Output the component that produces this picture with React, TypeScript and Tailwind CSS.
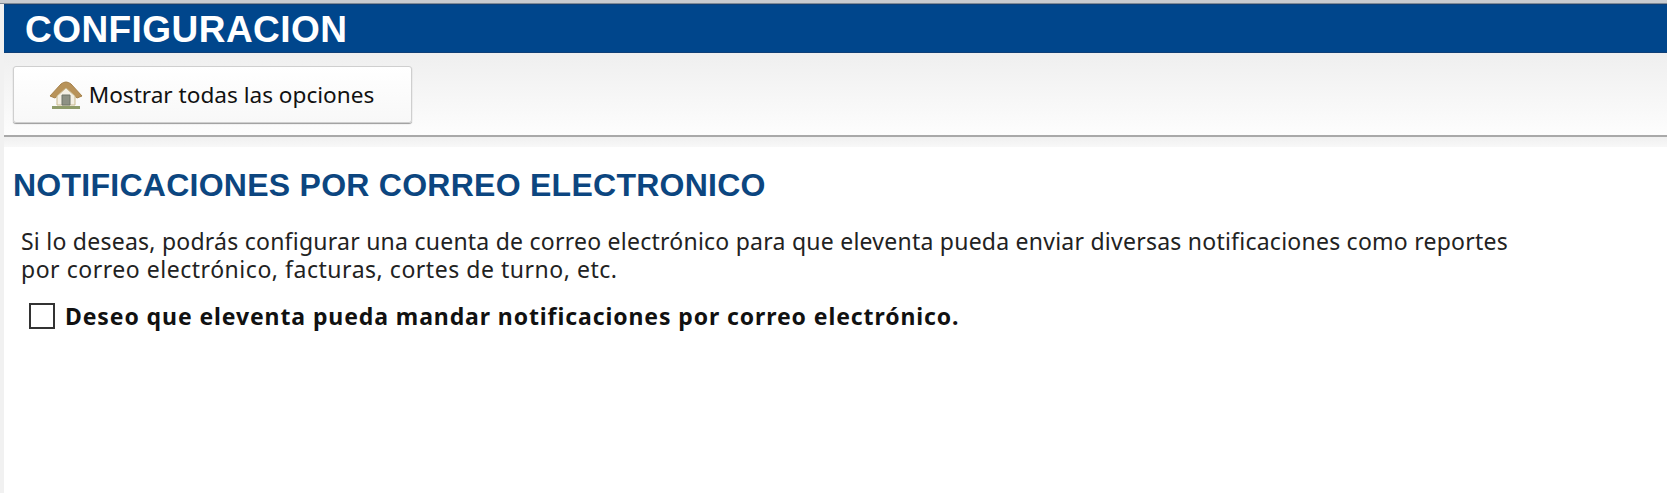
const HomeIcon = () => (
  <svg viewBox="0 0 34 30" className="h-[30px] w-[34px] shrink-0">
    <path d="M1 16 L12 4 Q17 0 22 4 L33 16 L28 18 L17 9 L6 18 Z" fill="#b8935a" stroke="#a5814a" strokeWidth="1" />
    <path d="M8 16 L17 8 L26 16 V25 H8 Z" fill="#f3efe4" stroke="#c9b98e" strokeWidth="1" />
    <path d="M13 15 H21 V25 H13 Z" fill="#8d9184" stroke="#6f7468" strokeWidth="1" />
    <path d="M3 26 H31 V29 H3 Z" fill="#8f9c6a" />
  </svg>
);

export default function App() {
  return (
    <div className="h-[493px] w-[1667px] overflow-hidden bg-white font-['Liberation_Sans',sans-serif]">
      <div className="h-[4px] border-b border-[#7f8a96] bg-[#c9ccd0]" />
      <div className="h-[489px] border-l-[4px] border-[#f1f1f1]">
        <div className="flex h-[49px] items-center border-y border-[#0f3f77] bg-[#00468c] pt-[2px] pl-[21px]">
          <h1 className="text-[37px] leading-none font-bold tracking-[0.45px] text-white">CONFIGURACION</h1>
        </div>
        <div className="h-[84px] border-b-[2px] border-[#a9a9a9] bg-gradient-to-b from-[#efefef] to-[#fdfdfd] pt-[13px] pl-[9px]">
          <button className="flex h-[57px] w-[399px] items-center justify-center gap-[6px] rounded-[3px] border border-[#cfcfcf] bg-gradient-to-b from-white to-[#f8f8f8] pr-[2px] font-['Noto_Sans',sans-serif] text-[22.6px] text-[#111] shadow-[0_1px_1px_#999]">
            <HomeIcon />
            Mostrar todas las opciones
          </button>
        </div>
        <div className="h-[10px] bg-gradient-to-b from-[#f0f0f0] to-[#f8f8f8]" />
        <div className="pl-[9px]">
          <h2 className="mt-[20px] text-[32px] leading-[36px] font-bold tracking-[0.26px] text-[#0c4680]">
            NOTIFICACIONES POR CORREO ELECTRONICO
          </h2>
          <p className="mt-[24px] w-[1560px] pl-[8px] font-['Noto_Sans',sans-serif] text-[23px] leading-[28px] tracking-[0.24px] text-[#222]">
            Si lo deseas, podrás configurar una cuenta de correo electrónico para que eleventa pueda enviar diversas notificaciones como reportes
            <br />
            <span className="tracking-[0.53px]">por correo electrónico, facturas, cortes de turno, etc.</span>
          </p>
          <label className="mt-[19px] flex items-center gap-[10px] pl-[16px]">
            <span className="h-[26px] w-[26px] border-[2px] border-[#333] bg-white" />
            <span className="font-['Noto_Sans',sans-serif] text-[23px] leading-[28px] font-bold tracking-[0.9px] text-[#111]">
              Deseo que eleventa pueda mandar notificaciones por correo electrónico.
            </span>
          </label>
        </div>
      </div>
    </div>
  );
}
